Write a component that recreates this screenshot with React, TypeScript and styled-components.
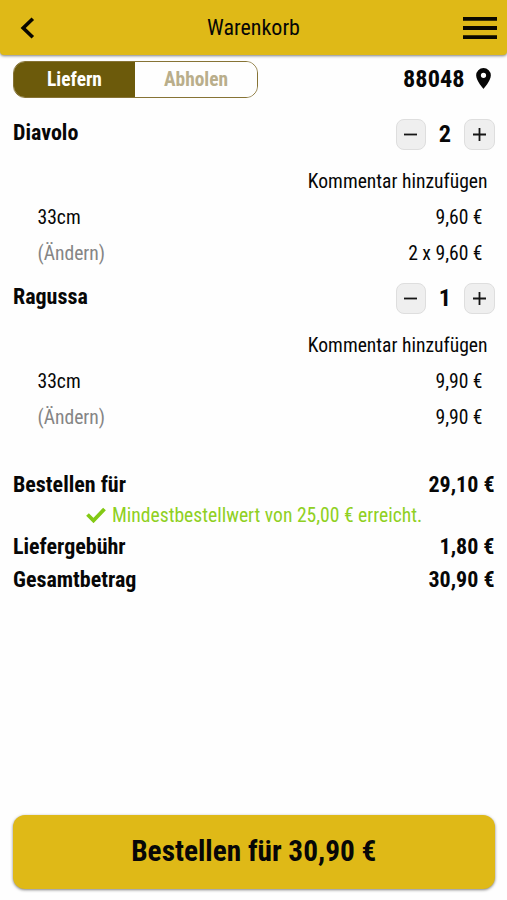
import React from 'react';
import styled, { createGlobalStyle } from 'styled-components';

const Global = createGlobalStyle`
  * { box-sizing: border-box; }
  body { margin: 0; background: #fefefe; }
  button { font: inherit; color: inherit; cursor: pointer; }
`;

const Page = styled.div`
  display: flex;
  flex-direction: column;
  height: 900px;
  color: #070707;
  font-family: 'Roboto Condensed', Roboto, sans-serif;
  font-stretch: 75%;
  font-size: 20px;
`;

const Header = styled.header`
  display: grid;
  grid-template-columns: 60px 1fr 60px;
  align-items: center;
  height: 55px;
  background: #dfb917;
  border-radius: 0 0 4px 4px;
  box-shadow: 0 1px 3px rgba(0, 0, 0, 0.5);
`;

const IconButton = styled.button<{ $end?: boolean }>`
  display: flex;
  justify-content: ${(p) => (p.$end ? 'flex-end' : 'flex-start')};
  padding: ${(p) => (p.$end ? '0 10px 0 0' : '0 0 0 20px')};
  border: 0;
  background: none;
`;

const Label = styled.span<{ $size?: number; $bold?: boolean; $color?: string }>`
  font-size: ${(p) => p.$size ?? 19.6}px;
  font-weight: ${(p) => (p.$bold ? 700 : 400)};
  color: ${(p) => p.$color ?? 'inherit'};
  white-space: nowrap;
`;

const Title = styled(Label)`
  text-align: center;
`;

const Main = styled.main`
  flex: 1;
  padding: 6px 12.5px 0 13px;
`;

const Delivery = styled.div`
  display: flex;
  align-items: center;
  justify-content: space-between;
  height: 37px;
`;

const Toggle = styled.div`
  display: flex;
  width: 245px;
  height: 37px;
  border: 1px solid #867335;
  border-radius: 12px;
  overflow: hidden;
`;

const ToggleOption = styled.button<{ $active?: boolean }>`
  flex: ${(p) => (p.$active ? '0 0 121px' : '1')};
  padding: 0 0 1px;
  border: 0;
  background: ${(p) => (p.$active ? '#6c5a0b' : '#fefefe')};
`;

const Place = styled.div`
  display: flex;
  align-items: center;
  gap: 11px;
  padding: 0 4px 3px 0;
`;

const Item = styled.section`
  height: 164px;
`;

const ItemHead = styled.div`
  display: flex;
  justify-content: space-between;
  height: 65px;
  padding-top: 21px;
`;

const Name = styled(Label)`
  line-height: 27px;
`;

const Stepper = styled.div`
  display: grid;
  grid-template-columns: 30.5px 38px 30.5px;
  height: 31px;
  align-items: center;
  text-align: center;
`;

const Count = styled(Label)`
  padding-bottom: 2px;
`;

const StepButton = styled.button`
  display: flex;
  align-items: center;
  justify-content: center;
  width: 100%;
  height: 31px;
  padding: 0;
  border: 1px solid #dedede;
  border-radius: 8px;
  background: #efefef;
`;

const Comment = styled.div`
  height: 36px;
  padding-right: 7px;
  line-height: 36px;
  text-align: right;
`;

const Detail = styled.div`
  display: flex;
  justify-content: space-between;
  height: 36px;
  padding: 0 12px 0 24.5px;
  line-height: 37px;
`;

const Summary = styled.section`
  padding-top: 41.5px;
`;

const Total = styled.div`
  display: flex;
  justify-content: space-between;
  height: 33px;
  line-height: 33px;
`;

const Minimum = styled.div`
  display: flex;
  align-items: center;
  gap: 6px;
  height: 29.5px;
  padding-left: 73px;
`;

const Order = styled.button`
  height: 74px;
  margin: 0 12.5px 11.5px 13px;
  padding: 0 0 2px;
  border: 0;
  border-radius: 12px;
  background: #dfb917;
  box-shadow: 0 1px 3px rgba(0, 0, 0, 0.5);
`;

const items = [
  { name: 'Diavolo', count: 2, price: '9,60 €', sum: '2 x 9,60 €' },
  { name: 'Ragussa', count: 1, price: '9,90 €', sum: '9,90 €' },
];

const Step = ({ plus }: { plus?: boolean }) => (
  <StepButton aria-label={plus ? 'Mehr' : 'Weniger'}>
    <svg width="13" height="13" viewBox="0 0 13 13" stroke="#151515" strokeWidth="1.8">
      <path d={plus ? 'M0 6.5H13M6.5 0V13' : 'M0 6.5H13'} />
    </svg>
  </StepButton>
);

export default function App() {
  return (
    <Page>
      <Global />
      <Header>
        <IconButton aria-label="Zurück">
          <svg width="15" height="22" viewBox="0 0 15 22" fill="none" stroke="#080700" strokeWidth="3.6">
            <path d="M12.8 1.8 3.2 11l9.6 9.2" />
          </svg>
        </IconButton>
        <Title $size={22}>Warenkorb</Title>
        <IconButton $end aria-label="Menü">
          <svg width="34" height="24" viewBox="0 0 34 24" fill="#0b0900">
            <path d="M0 1h34v3.8H0zM0 10.1h34v3.8H0zM0 19.2h34V23H0z" />
          </svg>
        </IconButton>
      </Header>
      <Main>
        <Delivery>
          <Toggle>
            <ToggleOption $active><Label $bold $size={19.4} $color="#fff">Liefern</Label></ToggleOption>
            <ToggleOption><Label $bold $size={19.4} $color="#b9ae8b">Abholen</Label></ToggleOption>
          </Toggle>
          <Place>
            <Label $bold $size={24.3}>88048</Label>
            <svg width="15" height="21" viewBox="0 0 14 20" fill="#070707">
              <path fillRule="evenodd" d="M7 0a7 7 0 0 0-7 7c0 5.25 7 13 7 13s7-7.75 7-13a7 7 0 0 0-7-7m0 9.5a2.5 2.5 0 1 1 0-5 2.5 2.5 0 0 1 0 5" />
            </svg>
          </Place>
        </Delivery>
        {items.map((item) => (
          <Item key={item.name}>
            <ItemHead>
              <Name $bold $size={22}>{item.name}</Name>
              <Stepper>
                <Step />
                <Count $bold $size={24.3}>{item.count}</Count>
                <Step plus />
              </Stepper>
            </ItemHead>
            <Comment><Label>Kommentar hinzufügen</Label></Comment>
            <Detail><Label>33cm</Label><Label>{item.price}</Label></Detail>
            <Detail><Label $color="#858585">(Ändern)</Label><Label>{item.sum}</Label></Detail>
          </Item>
        ))}
        <Summary>
          <Total><Label $bold $size={22}>Bestellen für</Label><Label $bold $size={22}>29,10 €</Label></Total>
          <Minimum>
            <svg width="20" height="16" viewBox="0 0 20 16" fill="none" stroke="#83c914" strokeWidth="3.8">
              <path d="m1.5 7.5 6 6L18.5 2" />
            </svg>
            <Label $color="#8fd022">Mindestbestellwert von 25,00 € erreicht.</Label>
          </Minimum>
          <Total><Label $bold $size={22}>Liefergebühr</Label><Label $bold $size={22}>1,80 €</Label></Total>
          <Total><Label $bold $size={22}>Gesamtbetrag</Label><Label $bold $size={22}>30,90 €</Label></Total>
        </Summary>
      </Main>
      <Order><Label $bold $size={29.3}>Bestellen für 30,90 €</Label></Order>
    </Page>
  );
}
